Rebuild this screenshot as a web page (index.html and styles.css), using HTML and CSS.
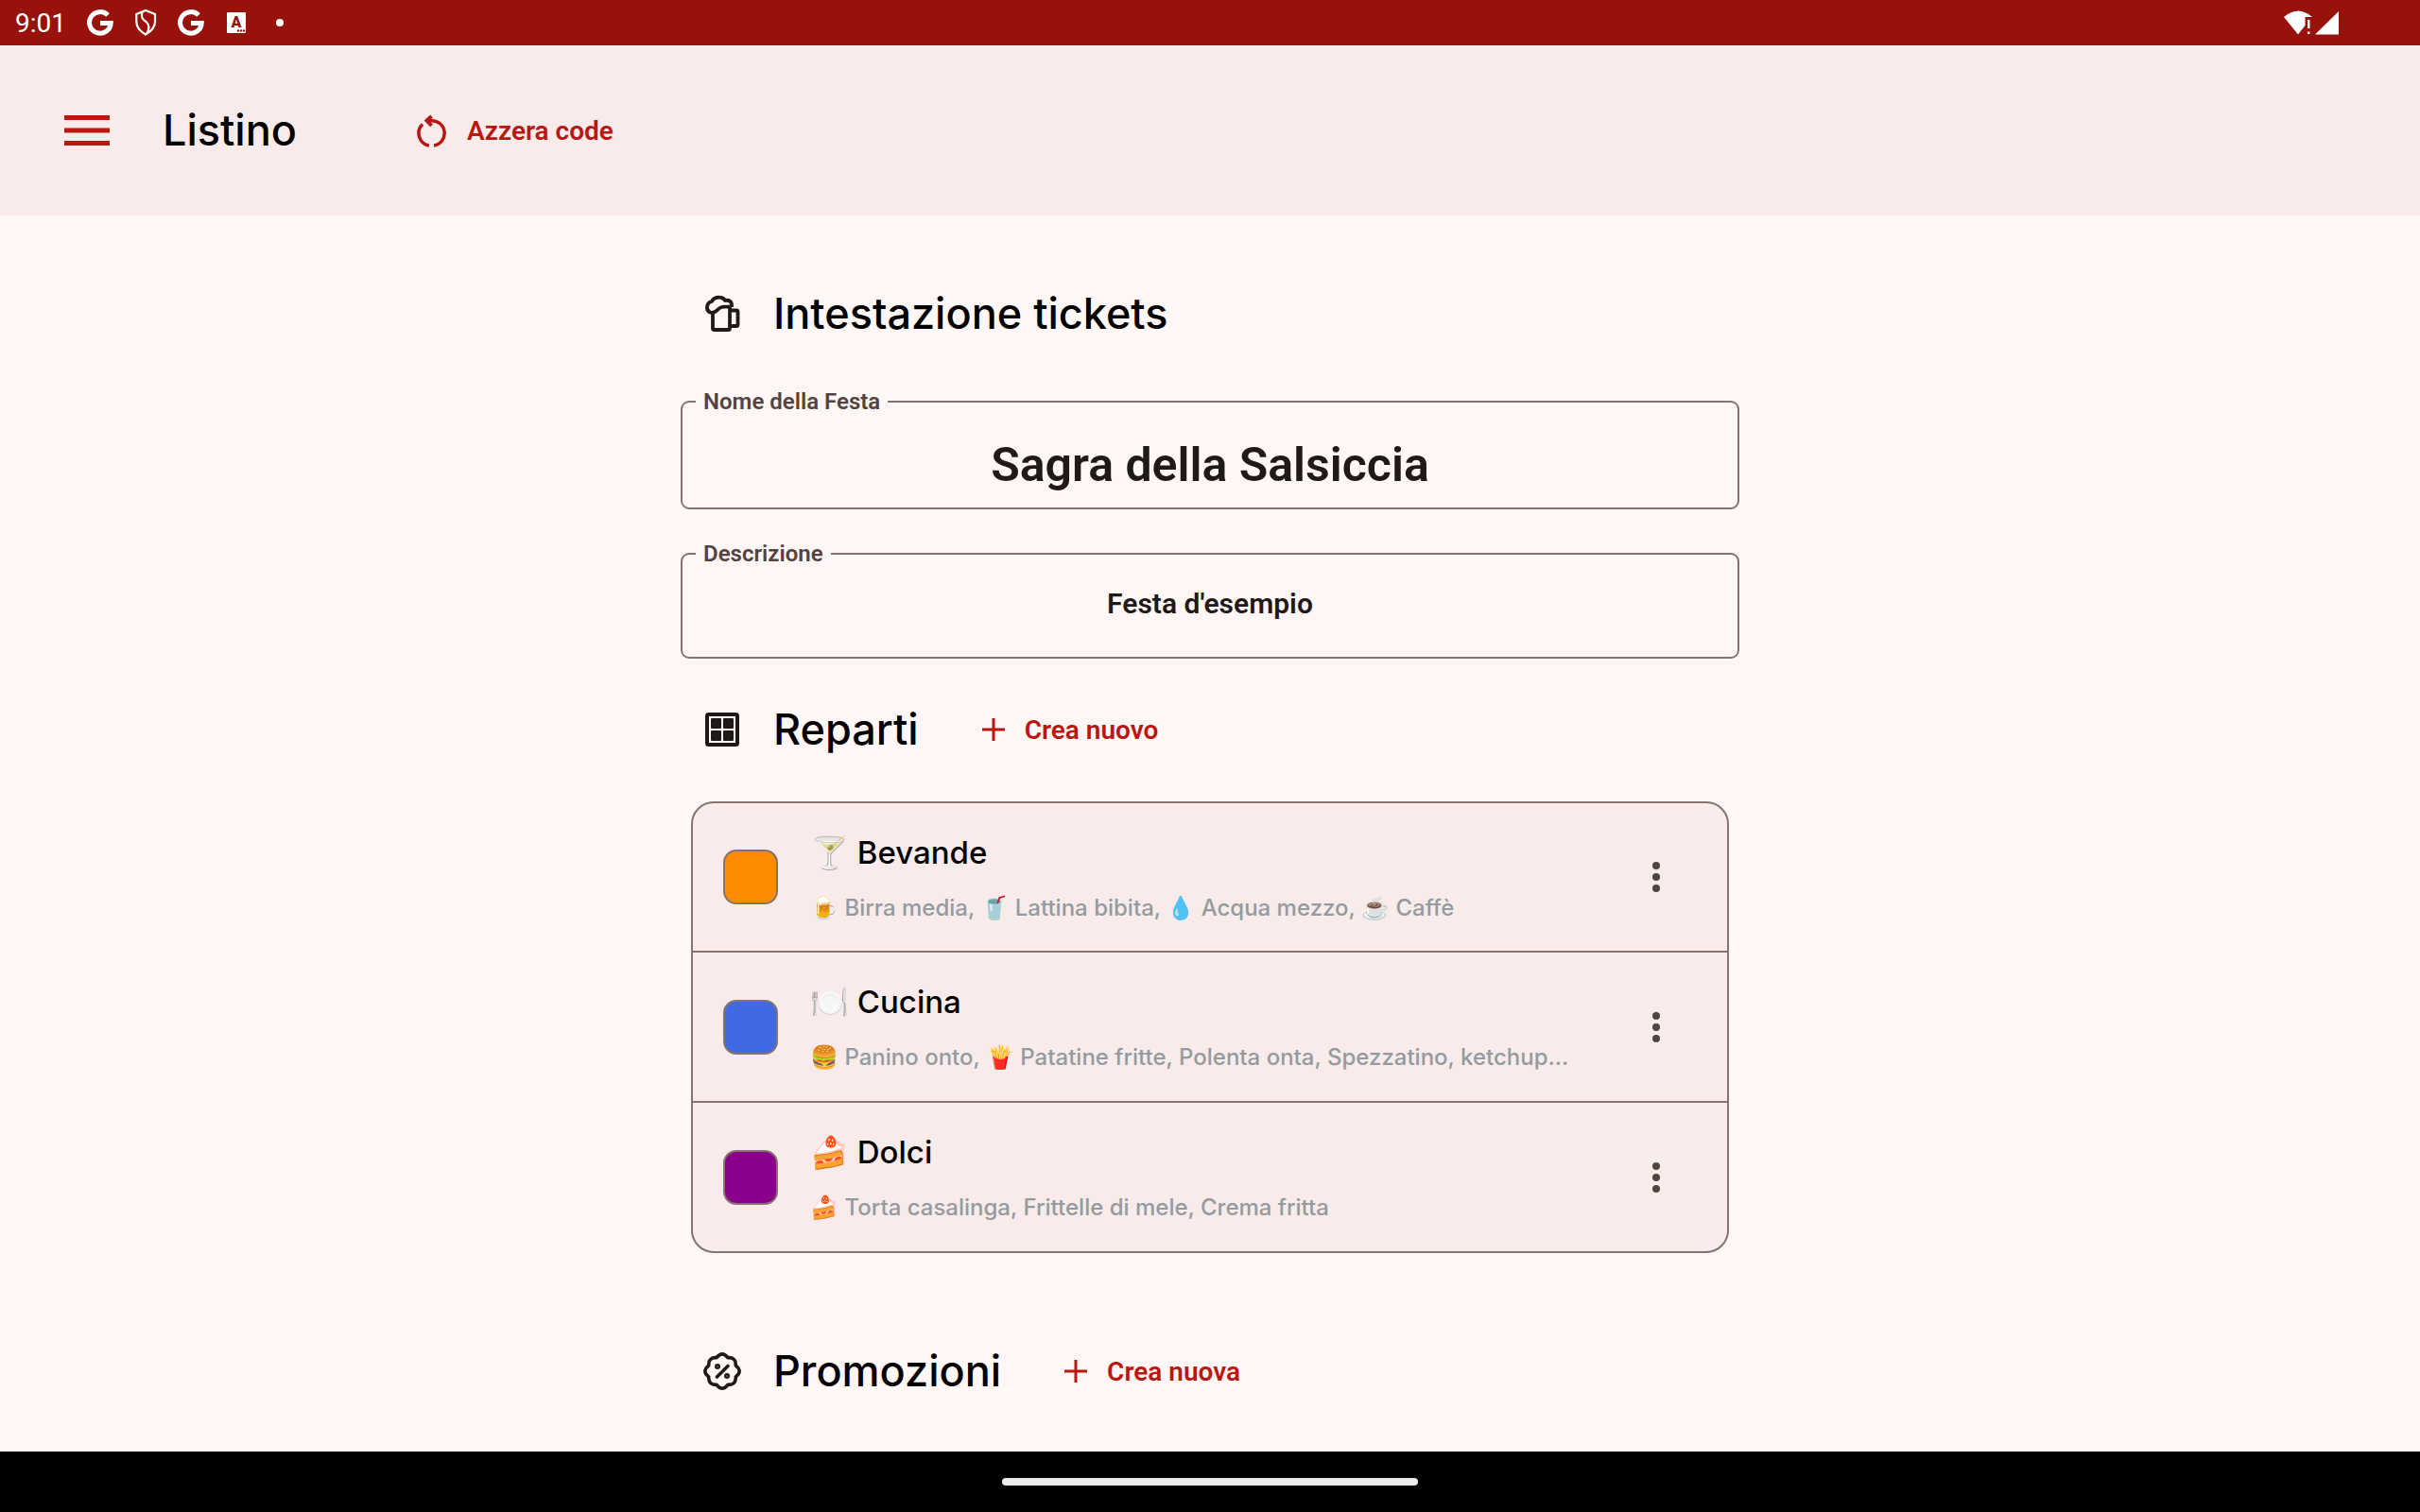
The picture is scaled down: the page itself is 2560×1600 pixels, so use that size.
FILE: index.html
```
<!DOCTYPE html>
<html lang="it">
<head>
  <meta charset="UTF-8">
  <meta name="viewport" content="width=device-width, initial-scale=1.0">
  <title>Listino</title>
  <link rel="stylesheet" href="styles.css">
</head>
<body>
  <div class="status-bar">
    <span class="clock">9:01</span>
    <div class="notifications">
      <svg viewBox="0 0 48 48"><path d="M32 16A11.300 11.300 0 1 0 35.200 24.500H24" fill="none" stroke="#fff" stroke-width="5"/></svg>
      <svg viewBox="0 0 48 48"><path d="M24 11L34 15V23C34 29 30 33 24 36.500C18 33 14.300 29 14.300 23V15ZM20.500 12.500C18.500 20 22 21 25 23.500C29 27 28 31 25 36" fill="none" stroke="#fff" stroke-width="2.200"/></svg>
      <svg viewBox="0 0 48 48"><path d="M32 16A11.300 11.300 0 1 0 35.200 24.500H24" fill="none" stroke="#fff" stroke-width="5"/></svg>
      <svg viewBox="0 0 48 48">
        <rect x="14" y="13" width="20" height="22" rx="1" fill="#fff"/>
        <text class="badge-letter" x="24" y="29">A</text>
        <g fill="#97120b"><circle cx="26" cy="32.500" r="1.200"/><circle cx="29" cy="32.500" r="1.200"/><circle cx="32" cy="32.500" r="1.200"/></g>
      </svg>
      <svg viewBox="0 0 48 48"><circle cx="22" cy="24" r="4" fill="#fff"/></svg>
    </div>
    <svg class="signal" viewBox="0 0 58 32" fill="#fff">
      <path d="M0 10Q15 -3 30 10H22.500V19L15 28.500Z"/>
      <rect x="25" y="13" width="2.500" height="9"/>
      <rect x="25" y="25.500" width="2.500" height="2.500"/>
      <path d="M58 4V28.500H33Z"/>
    </svg>
  </div>

  <header class="app-bar">
    <button class="menu-button" aria-label="Menu">
      <svg viewBox="0 0 48 32"><path d="M0 2.500H48M0 16H48M0 29.500H48" stroke="#ba1710" stroke-width="5"/></svg>
    </button>
    <h1 class="heading">Listino</h1>
    <button class="text-button">
      <svg class="icon" viewBox="0 0 40 40" fill="none" stroke="currentColor" stroke-width="3.500">
        <path d="M7 12.500A13.300 13.300 0 0 0 14 35.100M19 35.100A13.300 13.300 0 0 0 16 8.700H11"/>
        <path d="M16.500 4L11.500 8.700L16.500 14" stroke-width="4"/>
      </svg>
      Azzera code
    </button>
  </header>

  <main class="content">
    <section>
      <div class="section-head">
        <svg class="icon" viewBox="0 0 40 40" fill="none" stroke="#1f1a19" stroke-width="3.800" stroke-linejoin="round">
          <path d="M30 13V11C30 7 27 5 23 6C20 1 11 2 9 7C3 8 2.500 16 7 18.500C12 20 14 17 16 15C18 13 20 12.700 22 12.700H28"/>
          <path d="M10 18V35.500Q10 37 11.500 37H26.500Q28 37 28 35.500V12.700M28 16.500H35Q36.500 16.500 36.500 18V31.500Q36.500 33 35 33H28"/>
        </svg>
        <h2 class="heading">Intestazione tickets</h2>
      </div>
      <fieldset class="field">
        <legend><label for="nome">Nome della Festa</label></legend>
        <input class="field-input field-name" type="text" id="nome" value="Sagra della Salsiccia">
      </fieldset>
      <fieldset class="field">
        <legend><label for="descrizione">Descrizione</label></legend>
        <input class="field-input field-desc" type="text" id="descrizione" value="Festa d'esempio">
      </fieldset>
    </section>

    <section>
      <div class="section-head">
        <svg class="icon" viewBox="0 0 40 40" fill="#1f1a19">
          <rect x="4" y="4" width="32" height="32" rx="1.500" fill="none" stroke="#1f1a19" stroke-width="4"/>
          <rect x="8" y="8" width="11" height="11" rx="1"/>
          <rect x="21" y="8" width="11" height="11" rx="1"/>
          <rect x="8" y="21" width="11" height="11" rx="1"/>
          <rect x="21" y="21" width="11" height="11" rx="1"/>
        </svg>
        <h2 class="heading">Reparti</h2>
        <button class="text-button">
          <svg class="icon" viewBox="0 0 40 40"><path d="M9 19H33M21 7V31" stroke="currentColor" stroke-width="3"/></svg>
          Crea nuovo
        </button>
      </div>
      <ul class="card">
        <li class="row">
          <span class="swatch orange"></span>
          <div class="row-text">
            <h3 class="row-name">🍸 Bevande</h3>
            <p class="row-items">🍺 Birra media, 🥤 Lattina bibita, 💧 Acqua mezzo, ☕ Caffè</p>
          </div>
          <button class="more-button" aria-label="Altro">
            <svg viewBox="0 0 48 48"><circle cx="24" cy="12" r="4"/><circle cx="24" cy="24" r="4"/><circle cx="24" cy="36" r="4"/></svg>
          </button>
        </li>
        <li class="row">
          <span class="swatch blue"></span>
          <div class="row-text">
            <h3 class="row-name">🍽️ Cucina</h3>
            <p class="row-items">🍔 Panino onto, 🍟 Patatine fritte, Polenta onta, Spezzatino, ketchup...</p>
          </div>
          <button class="more-button" aria-label="Altro">
            <svg viewBox="0 0 48 48"><circle cx="24" cy="12" r="4"/><circle cx="24" cy="24" r="4"/><circle cx="24" cy="36" r="4"/></svg>
          </button>
        </li>
        <li class="row">
          <span class="swatch purple"></span>
          <div class="row-text">
            <h3 class="row-name">🍰 Dolci</h3>
            <p class="row-items">🍰 Torta casalinga, Frittelle di mele, Crema fritta</p>
          </div>
          <button class="more-button" aria-label="Altro">
            <svg viewBox="0 0 48 48"><circle cx="24" cy="12" r="4"/><circle cx="24" cy="24" r="4"/><circle cx="24" cy="36" r="4"/></svg>
          </button>
        </li>
      </ul>
    </section>

    <section>
      <div class="section-head">
        <svg class="icon" viewBox="-20 -20 40 40" fill="none" stroke="#1f1a19" stroke-width="3.600" stroke-linejoin="round" stroke-linecap="round">
          <path d="M-5.900 -14.300Q0 -22 5.900 -14.300Q14.800 -14.800 14.300 -5.900Q22 0 14.300 5.900Q14.800 14.800 5.900 14.300Q0 22 -5.900 14.300Q-14.800 14.800 -14.300 5.900Q-22 0 -14.300 -5.900Q-14.800 -14.800 -5.900 -14.300Z"/>
          <path d="M-5.500 6L6 -5.500"/>
          <circle cx="-5" cy="-5" r="1.200"/>
          <circle cx="5" cy="5" r="1.200"/>
        </svg>
        <h2 class="heading">Promozioni</h2>
        <button class="text-button">
          <svg class="icon" viewBox="0 0 40 40"><path d="M9 19H33M21 7V31" stroke="currentColor" stroke-width="3"/></svg>
          Crea nuova
        </button>
      </div>
    </section>
  </main>

  <div class="gesture-bar"><span class="pill"></span></div>
</body>
</html>
```
FILE: styles.css
```
* {
  box-sizing: border-box;
}

body {
  margin: 0;
  height: 100vh;
  display: flex;
  flex-direction: column;
  background: #fff7f5;
  color: #000;
  font-family: Roboto, sans-serif;
}

h1, h2, h3, p, ul {
  margin: 0;
  padding: 0;
}

button {
  border: 0;
  padding: 0;
  background: none;
  cursor: pointer;
}

svg {
  display: block;
}

/* system bars */
.status-bar {
  flex: none;
  display: flex;
  align-items: center;
  height: 48px;
  padding: 0 86px 0 16px;
  background: #97120b;
  color: #fff;
}

.clock {
  padding-top: 2px;
  font-size: 28px;
  line-height: 46px;
}

.notifications {
  display: flex;
  margin-left: 12px;
}

.notifications svg {
  width: 48px;
  height: 48px;
}

.badge-letter {
  fill: #97120b;
  font-size: 16px;
  font-weight: 900;
  text-anchor: middle;
}

.signal {
  width: 58px;
  height: 32px;
  margin-left: auto;
}

.gesture-bar {
  flex: none;
  display: flex;
  align-items: center;
  justify-content: center;
  height: 64px;
  background: #000;
}

.pill {
  width: 440px;
  height: 8px;
  border-radius: 4px;
  background: #ececec;
}

/* app bar */
.app-bar {
  flex: none;
  display: flex;
  align-items: center;
  height: 180px;
  padding: 0 68px;
  background: #f8ebea;
}

.menu-button {
  margin-right: 56px;
}

.menu-button svg {
  width: 48px;
  height: 32px;
}

.app-bar .text-button {
  margin-left: 126px;
}

.heading {
  font: 500 45px/60px Inter, sans-serif;
}

.icon {
  flex: none;
  width: 40px;
  height: 40px;
}

.text-button {
  display: flex;
  align-items: center;
  gap: 14px;
  padding-top: 2px;
  color: #ba1710;
  font: 600 28px/40px Roboto, sans-serif;
}

/* content */
.content {
  flex: 1;
  min-height: 0;
  overflow: hidden;
  width: 100%;
  max-width: 1120px;
  margin: 0 auto;
  padding-top: 74px;
}

.section-head {
  display: flex;
  align-items: center;
  padding: 0 24px;
}

.section-head .heading {
  margin-left: 34px;
}

.section-head .text-button {
  margin-left: 58px;
}

.field {
  margin: 49px 0 0;
  padding: 0;
  border: 2px solid #857370;
  border-radius: 9px;
}

.field + .field {
  margin: 33px 0 45px;
}

.field legend {
  margin-left: 14px;
  padding: 0 8px;
  color: #534341;
  font-size: 24px;
  font-weight: 600;
  line-height: 28px;
}

.field-input {
  display: block;
  width: 100%;
  border: 0;
  outline: 0;
  background: none;
  color: #1f1a19;
  font-family: inherit;
  font-weight: 600;
  text-align: center;
}

.field-name {
  height: 98px;
  padding: 8px 32px 0;
  font-size: 50px;
}

.field-desc {
  height: 95px;
  padding: 0 32px 18px;
  font-size: 30px;
}

.card {
  margin: 46px 11px 95px;
  border: 2px solid #857370;
  border-radius: 24px;
  background: #f8ebea;
  list-style: none;
}

.row {
  display: flex;
  align-items: center;
  gap: 34px;
  height: 156px;
  padding: 0 51px 0 32px;
}

.row + .row {
  height: 159px;
  border-top: 2px solid #857370;
}

.row-text {
  flex: 1;
  min-width: 0;
}

.row-name {
  margin-bottom: 17px;
  font: 500 33px/48px Inter, sans-serif;
}

.row-items {
  overflow: hidden;
  white-space: nowrap;
  text-overflow: ellipsis;
  color: #939ba0;
  font: 500 24px/36px Inter, sans-serif;
}

.swatch {
  width: 58px;
  height: 58px;
  border: 2px solid #857370;
  border-radius: 14px;
}

.orange {
  background: #ff8c00;
}

.blue {
  background: #4169e1;
}

.purple {
  background: #8b008b;
}

.more-button svg {
  width: 48px;
  height: 48px;
  fill: #534341;
}
```
